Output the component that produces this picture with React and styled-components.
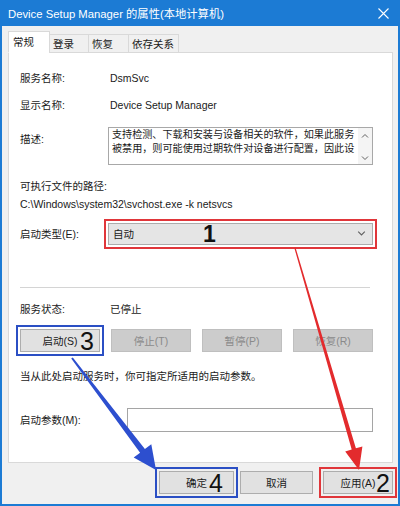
import React from "react";
import styled, { createGlobalStyle, css } from "styled-components";

const GlobalStyle = createGlobalStyle`
  body {
    margin: 0;
    font-family: "Liberation Sans", "Noto Sans CJK SC", sans-serif;
    font-size: 10.5px;
    color: #1a1a1a;
  }
`;

const Frame = styled.div`
  position: relative;
  width: 400px;
  height: 506px;
  overflow: hidden;
`;

const Window = styled.div`
  box-sizing: border-box;
  width: 400px;
  height: 506px;
  display: flex;
  flex-direction: column;
  background: #f0f0f0;
  border: 2px solid #1c7bd4;
  border-top: none;
`;

const TitleBar = styled.div`
  height: 26px;
  flex-shrink: 0;
  display: flex;
  align-items: center;
  justify-content: space-between;
  padding: 0 9px 0 6px;
  background: #1c7bd4;
  color: #fff;
  font-size: 11.3px;
`;

const Body = styled.div`
  flex: 1;
  display: flex;
  flex-direction: column;
  padding: 6px 5px 0 6px;
`;

const TabStrip = styled.div`
  display: flex;
  align-items: flex-end;
  height: 21px;
  margin-bottom: -1px;
  position: relative;
  z-index: 1;
`;

const Tab = styled.div`
  box-sizing: border-box;
  width: ${(p) => p.$w}px;
  height: ${(p) => (p.$active ? 22 : 19)}px;
  padding: ${(p) => (p.$active ? "3px 4px 0" : "2px 3px 0")};
  margin-left: ${(p) => (p.$first ? 0 : -1)}px;
  border: 1px solid #d9d9d9;
  font-size: 10.5px;
  line-height: 14px;
  white-space: nowrap;
  ${(p) =>
    p.$active
      ? css`
          background: #fff;
          border-bottom-color: #fff;
        `
      : css`
          background: #f0f0f0;
        `}
`;

const Panel = styled.div`
  box-sizing: border-box;
  height: 411px;
  display: flex;
  flex-direction: column;
  padding: 0 19px 0 11px;
  background: #fff;
  border: 1px solid #d9d9d9;
`;

const Row = styled.div`
  display: flex;
  align-items: ${(p) => p.$align || "center"};
  height: ${(p) => p.$h || 16}px;
  margin-top: ${(p) => p.$mt}px;
  flex-shrink: 0;
  line-height: 16px;
  white-space: nowrap;
`;

const Label = styled.div`
  width: ${(p) => p.$w || 90}px;
  flex-shrink: 0;
  padding-top: ${(p) => p.$pt || 0}px;
`;

const DescBox = styled.div`
  box-sizing: border-box;
  display: flex;
  width: 265px;
  height: 38px;
  margin-left: -2px;
  border: 1px solid #a8a8a8;
`;

const DescText = styled.div`
  flex: 1;
  padding-left: 3px;
  font-size: 10.1px;
  line-height: 14px;
  overflow: hidden;
`;

const ScrollBar = styled.div`
  width: 14px;
  display: flex;
  flex-direction: column;
  justify-content: space-between;
  align-items: center;
  padding: 5px 0 3px;
  background: #f4f4f4;
`;

const Combo = styled.div`
  position: relative;
  box-sizing: border-box;
  width: 266px;
  height: 22px;
  margin-left: -2px;
  display: flex;
  align-items: center;
  justify-content: space-between;
  padding: 0 6px 0 4px;
  background: #e5e5e5;
  border: 1px solid #acacac;
  outline: 2px solid #e0363a;
  outline-offset: 2px;
`;

const Separator = styled.div`
  height: 1px;
  margin: 40px 3px 0 0;
  background: #d4d4d4;
  flex-shrink: 0;
`;

const ButtonRow = styled.div`
  display: flex;
  justify-content: space-between;
  height: 23px;
  margin-top: 12px;
  flex-shrink: 0;
`;

const Button = styled.div`
  position: relative;
  box-sizing: border-box;
  width: ${(p) => p.$w || 80}px;
  height: 23px;
  display: flex;
  align-items: center;
  justify-content: center;
  font-size: 10.5px;
  ${(p) =>
    p.$disabled
      ? css`
          background: #cccccc;
          border: 1px solid #bfbfbf;
          color: #8a8a8a;
        `
      : css`
          background: #e1e1e1;
          border: 1px solid #adadad;
          color: #1a1a1a;
        `}
  ${(p) =>
    p.$mark &&
    css`
      outline: 2px solid ${p.$mark};
      outline-offset: 2px;
    `}
`;

const Hint = styled.div`
  margin-top: 16px;
  line-height: 16px;
  flex-shrink: 0;
`;

const Input = styled.div`
  box-sizing: border-box;
  width: 246px;
  height: 24px;
  border: 1px solid #a5a5a5;
  background: #fff;
`;

const Footer = styled.div`
  display: flex;
  justify-content: flex-end;
  margin-top: 8px;
`;

const FooterGap = styled.div`
  width: ${(p) => p.$w}px;
`;

const Num = styled.span`
  position: absolute;
  left: ${(p) => p.$x}px;
  top: 50%;
  transform: translateY(-50%);
  font-family: "Liberation Sans", sans-serif;
  font-size: ${(p) => p.$size || 25}px;
  font-weight: ${(p) => (p.$bold ? 700 : 400)};
  line-height: 1;
  color: #111;
`;

const Arrows = styled.svg`
  position: absolute;
  left: 0;
  top: 0;
  pointer-events: none;
`;

const Chevron = ({ up, size = 8 }) => (
  <svg width={size} height={size / 2 + 1} viewBox="0 0 8 5">
    <polyline
      points={up ? "1,4.5 4,1.5 7,4.5" : "1,0.5 4,3.5 7,0.5"}
      fill="none"
      stroke="#606060"
      strokeWidth="1"
    />
  </svg>
);

export default function App() {
  return (
    <Frame>
      <GlobalStyle />
      <Window>
        <TitleBar>
          <span>Device Setup Manager 的属性(本地计算机)</span>
          <svg width="11" height="11" viewBox="0 0 11 11">
            <path d="M0.5 0.5 L10.5 10.5 M10.5 0.5 L0.5 10.5" stroke="#fff" strokeWidth="1.1" />
          </svg>
        </TitleBar>
        <Body>
          <TabStrip>
            <Tab $w={42} $first $active>常规</Tab>
            <Tab $w={40}>登录</Tab>
            <Tab $w={41}>恢复</Tab>
            <Tab $w={51}>依存关系</Tab>
          </TabStrip>
          <Panel>
            <Row $mt={17}>
              <Label>服务名称:</Label>
              <span>DsmSvc</span>
            </Row>
            <Row $mt={11}>
              <Label>显示名称:</Label>
              <span>Device Setup Manager</span>
            </Row>
            <Row $mt={14} $h={38} $align="flex-start">
              <Label $pt={4}>描述:</Label>
              <DescBox>
                <DescText>
                  <div>支持检测、下载和安装与设备相关的软件，如果此服务</div>
                  <div>被禁用，则可能使用过期软件对设备进行配置，因此设</div>
                </DescText>
                <ScrollBar>
                  <Chevron up />
                  <Chevron />
                </ScrollBar>
              </DescBox>
            </Row>
            <Row $mt={13}>可执行文件的路径:</Row>
            <Row $mt={2}>C:\Windows\system32\svchost.exe -k netsvcs</Row>
            <Row $mt={9} $h={26}>
              <Label>启动类型(E):</Label>
              <Combo>
                <span>自动</span>
                <Num $x={94} $bold $size={23}>1</Num>
                <Chevron size={9} />
              </Combo>
            </Row>
            <Separator />
            <Row $mt={13}>
              <Label>服务状态:</Label>
              <span>已停止</span>
            </Row>
            <ButtonRow>
              <Button $mark="#2b4fc4">
                启动(S)
                <Num $x={59}>3</Num>
              </Button>
              <Button $disabled>停止(T)</Button>
              <Button $disabled>暂停(P)</Button>
              <Button $disabled>恢复(R)</Button>
            </ButtonRow>
            <Hint>当从此处启动服务时，你可指定所适用的启动参数。</Hint>
            <Row $mt={24} $h={24}>
              <Label $w={107}>启动参数(M):</Label>
              <Input />
            </Row>
          </Panel>
          <Footer>
            <Button $w={75} $mark="#2b4fc4">
              确定
              <Num $x={49}>4</Num>
            </Button>
            <FooterGap $w={6} />
            <Button $w={73}>取消</Button>
            <FooterGap $w={10} />
            <Button $w={70} $mark="#e0363a">
              应用(A)
              <Num $x={52}>2</Num>
            </Button>
          </Footer>
        </Body>
      </Window>
      <Arrows width="400" height="506" viewBox="0 0 400 506">
        <polygon
          points="294.4,248.2 351.7,449.5 345.2,451.4 359,470 362.4,446.4 355.9,448.3 295.6,247.8"
          fill="#e32b2d"
        />
        <polygon
          points="71.2,358.6 140.1,452.7 133.7,457.6 156,470 151.3,444.2 144.9,449.1 72.8,357.4"
          fill="#2d4fcf"
        />
      </Arrows>
    </Frame>
  );
}
